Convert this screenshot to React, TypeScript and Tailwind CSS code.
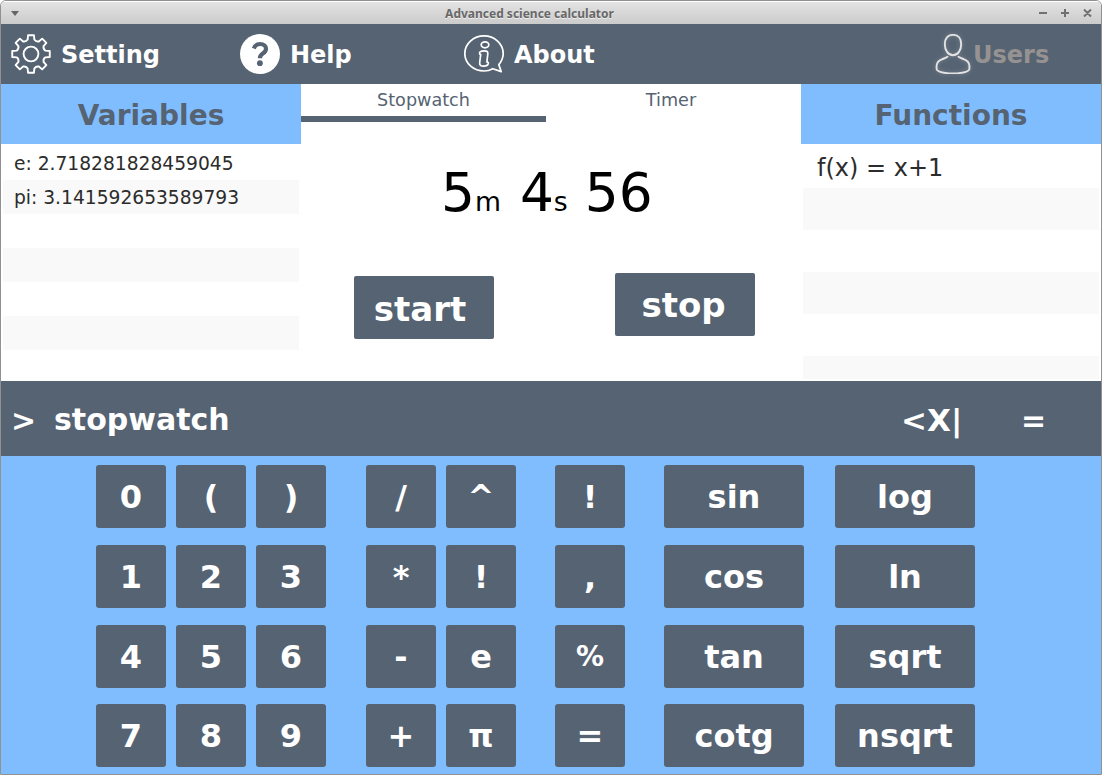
import React from "react";

const keyRows: string[][] = [
  ["0", "(", ")", "/", "^", "!", "sin", "log"],
  ["1", "2", "3", "*", "!", ",", "cos", "ln"],
  ["4", "5", "6", "-", "e", "%", "tan", "sqrt"],
  ["7", "8", "9", "+", "π", "=", "cotg", "nsqrt"],
];

const gaps = ["", "ml-[10px]", "ml-[10px]", "ml-[40px]", "ml-[10px]", "ml-[39px]", "ml-[39px]", "ml-[31px]"];

function gearPath() {
  const pts: string[] = [];
  for (let i = 0; i < 8; i++) {
    const at = (deg: number, r: number) => {
      const a = ((i * 45 + deg - 90) * Math.PI) / 180;
      return `${(20 + r * Math.cos(a)).toFixed(2)} ${(20 + r * Math.sin(a)).toFixed(2)}`;
    };
    pts.push(`${i === 0 ? "M" : "L"}${at(-9, 19)} L${at(9, 19)} L${at(13, 14.8)} Q${at(22.5, 13)} ${at(32, 14.8)}`);
  }
  return pts.join(" ") + "Z";
}

function GearIcon() {
  return (
    <svg width="40" height="40" viewBox="0 0 40 40" fill="none" stroke="#fff" strokeWidth="1.9" strokeLinejoin="round">
      <path d={gearPath()} />
      <circle cx="20" cy="20" r="7.4" />
    </svg>
  );
}

function HelpIcon() {
  return (
    <svg width="40" height="40" viewBox="0 0 40 40" fill="none">
      <circle cx="20" cy="20" r="20" fill="#fff" />
      <path d="M13.800 14.400C15 11.300 17.200 10 20.200 10c3.400 0 5.800 1.900 5.800 4.700 0 2.400-1.200 3.500-3.200 4.800-2.200 1.500-2.900 2.300-2.900 4.700" stroke="#566372" strokeWidth="4.200" />
      <circle cx="19.900" cy="29.200" r="2.900" fill="#566372" />
    </svg>
  );
}

function InfoIcon() {
  return (
    <svg width="40" height="40" viewBox="0 0 40 40" fill="none" stroke="#fff" strokeWidth="1.700" strokeLinejoin="round">
      <path d="M34.800 30.600C37.500 27.500 39.200 24 39.200 19.500 39.200 9.800 30.600 1.900 20 1.900S.8 9.800.8 19.500 9.400 37 20 37c3.200 0 6.200-.8 8.800-2.300l8.400 2.900z" />
      <ellipse cx="21" cy="10.800" rx="3.800" ry="3" />
      <path d="M15.600 19.600c-.5-1.600 1-2.800 4.600-2.800 2.800 0 3.800.9 3.600 3l-.9 8.200c1.300.2 1.600.6 1.400 1.500-.4 1.600-2 2.600-4.700 2.600-3 0-4.200-1.100-3.900-3.400l1-8.300c-.6.1-1-.2-1.100-.8z" />
    </svg>
  );
}

function UserIcon() {
  return (
    <svg width="40" height="40" viewBox="0 0 40 40" fill="none" stroke="#e3e3e5" strokeWidth="1.900" className="drop-shadow-[0_0_2px_rgba(255,255,255,0.25)]">
      <path d="M20 .9c-5.200 0-8.200 3.600-8.200 9.300S15 21.200 20 21.200s8.200-5.300 8.200-11S25.200.9 20 .9z" />
      <path d="M15 22.300c-.8 1.300-3.500 1.900-6.200 3C5.200 26.600 3.800 28.600 3.600 31.800c-.2 4.400 0 4.600 3 5.800 3.600 1.300 8.400 1.800 13.400 1.800s9.800-.5 13.400-1.800c3-1.200 3.200-1.400 3-5.800-.2-3.200-1.600-5.200-5.200-6.500-2.700-1.100-5.400-1.700-6.200-3" />
    </svg>
  );
}

function TitleBar() {
  return (
    <header className="flex h-[23px] shrink-0 items-center border-t border-white bg-linear-to-b from-[#e3e3e3] to-[#cbcbcb] pr-[9px] pl-[10px]">
      <svg width="8" height="5" viewBox="0 0 8 5"><path d="M0 0h8L4 5z" fill="#666" /></svg>
      <h1 className="flex-1 pt-[2px] pl-[2px] text-center font-['Noto_Sans',sans-serif] text-[12px] leading-none font-bold text-[#686868] [text-shadow:0_1px_0_#eee]">Advanced science calculator</h1>
      <svg width="54" height="10" viewBox="0 0 54 10" fill="none" stroke="#707070" strokeWidth="2">
        <path d="M1 5h8M23 5h8M27 1v8M46 1.500l7 7M53 1.500l-7 7" />
      </svg>
    </header>
  );
}

function Stripes({ rows, className }: { rows: string[]; className: string }) {
  return (
    <ul className="mx-[2px] flex h-[233px] flex-col overflow-hidden">
      {rows.map((text, i) => (
        <li key={i} className={`flex shrink-0 items-center pt-[2px] leading-none whitespace-pre text-[#2c2c2c] ${className} ${i % 2 ? "bg-[#f9f9f9]" : "bg-white"}`}>
          {text}
        </li>
      ))}
    </ul>
  );
}

export default function App() {
  return (
    <div className="h-[775px] w-[1102px] overflow-hidden bg-white">
      <div className="flex h-full w-full flex-col overflow-hidden rounded-t-[6px] border border-[#919191] bg-white font-['DejaVu_Sans',sans-serif]">
        <TitleBar />
        <nav className="flex h-[60px] shrink-0 items-center bg-[#566372] pl-[10px] text-[24px] leading-none font-bold text-white">
          <div className="flex w-[229px] items-center gap-[10px]"><GearIcon /><span className="pt-[2px]">Setting</span></div>
          <div className="flex w-[224px] items-center gap-[10px]"><HelpIcon /><span className="pt-[2px]">Help</span></div>
          <div className="flex flex-1 items-center gap-[10px]"><InfoIcon /><span className="pt-[2px]">About</span></div>
          <div className="flex w-[168px] items-center text-[#969291]"><UserIcon /><span className="pt-[2px]">Users</span></div>
        </nav>

        <main className="flex h-[297px] shrink-0">
          <section className="w-[300px]">
            <h2 className="flex h-[60px] items-center justify-center bg-[#80bdff] pt-[4px] text-[28px] leading-none font-bold text-[#566372]">Variables</h2>
            <div className="pt-[2px]">
              <Stripes className="h-[34px] pl-[11px] text-[18.667px]" rows={["e: 2.718281828459045", "pi: 3.141592653589793", "", "", "", "", ""]} />
            </div>
          </section>

          <section className="flex w-[500px] flex-col">
            <div className="flex h-[38px] text-[17.600px] leading-none text-[#566372]">
              <div className="w-[245px] border-b-[6px] border-[#566372] pt-[8px] text-center">Stopwatch</div>
              <div className="w-[250px] pt-[8px] text-center">Timer</div>
            </div>
            <div className="flex h-[140px] items-baseline pt-[44px] pl-[140px] text-[53.333px] leading-none whitespace-pre text-black">
              <span>5</span>
              <span className="text-[26.667px]">m</span>
              <span className="ml-[19px]">4</span>
              <span className="text-[26.667px]">s</span>
              <span className="ml-[17px]">56</span>
            </div>
            <div className="flex pl-[53px] text-[34px] leading-none font-bold text-white">
              <button className="mt-[14px] h-[63px] w-[140px] rounded-[2px] bg-[#566372] pt-[3px] pr-[8px]">start</button>
              <button className="mt-[11px] ml-[121px] h-[63px] w-[140px] rounded-[2px] bg-[#566372] pr-[3px]">stop</button>
            </div>
          </section>

          <section className="w-[300px]">
            <h2 className="flex h-[60px] items-center justify-center bg-[#80bdff] pt-[4px] text-[28px] leading-none font-bold text-[#566372]">Functions</h2>
            <div className="pt-[2px]">
              <Stripes className="h-[42px] pl-[14px] text-[24px]" rows={["f(x) = x+1", "", "", "", "", ""]} />
            </div>
          </section>
        </main>

        <div className="flex h-[75px] shrink-0 items-center bg-[#566372] pl-[9px] text-[30px] leading-none font-bold text-white">
          <span className="w-[43px] pt-[4px] pl-[1px]">&gt;</span>
          <span className="flex-1 pt-[3px] pl-[1px]">stopwatch</span>
          <span className="w-[120px] pt-[3px] pl-[2px] text-[31px]">&lt;X|</span>
          <span className="w-[82px] pt-[4px] pl-[2px]">=</span>
        </div>

        <div className="flex flex-1 flex-col bg-[#80bdff] pt-[9px] pl-[95px] text-[32px] leading-none font-bold text-white">
          {keyRows.map((row, r) => (
            <div key={r} className={`flex shrink-0 ${r === 3 ? "h-[63px]" : r === 2 ? "h-[79px]" : "h-[80px]"}`}>
              {row.map((label, c) => (
                <button key={c} className={`h-[63px] shrink-0 rounded-[3px] bg-[#566372] ${gaps[c]} ${c > 5 ? "w-[140px]" : "w-[70px]"} ${label === "%" ? "text-[28px]" : ""}`}>
                  {label}
                </button>
              ))}
            </div>
          ))}
        </div>
      </div>
    </div>
  );
}
